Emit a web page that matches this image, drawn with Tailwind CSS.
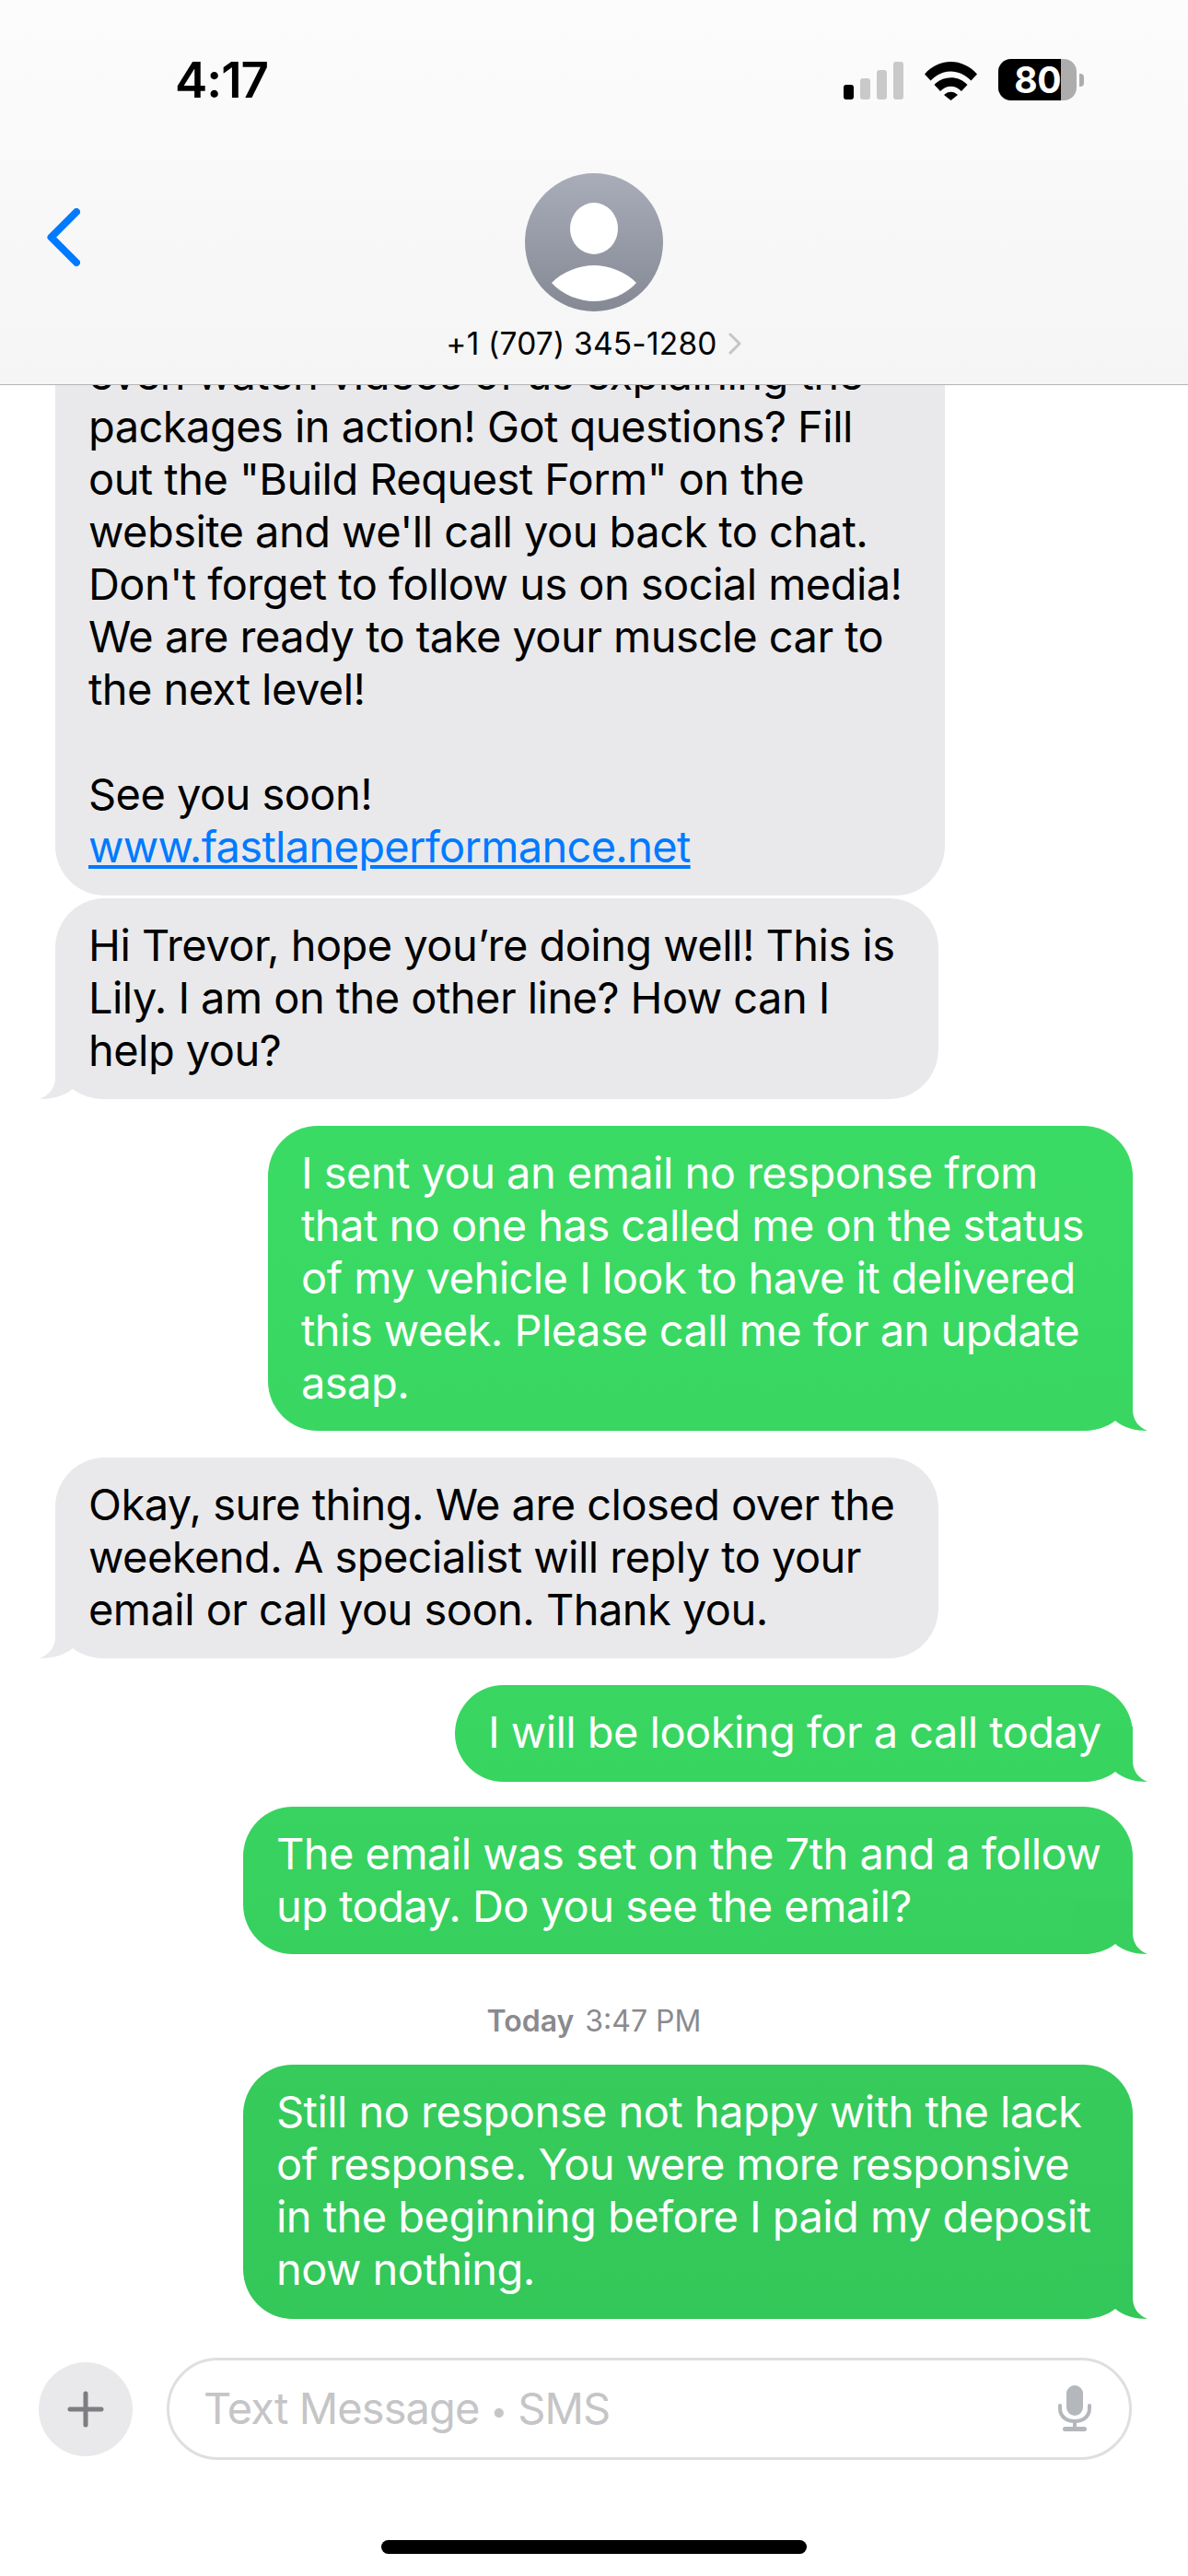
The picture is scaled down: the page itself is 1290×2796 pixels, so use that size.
<!DOCTYPE html>
<html lang="en">
  <head>
    <meta charset="UTF-8" />
    <title>Messages</title>
    <script src="https://cdn.jsdelivr.net/npm/@tailwindcss/browser@4"></script>
  </head>
  <body class="bg-white text-black font-['Inter','Liberation_Sans',sans-serif]">
    <div class="w-[1290px] h-[2796px] flex flex-col overflow-hidden">
      <!-- Header -->
      <header class="h-[418px] shrink-0 bg-gradient-to-b from-[#fcfcfc] to-[#f5f5f5] border-b border-[#b4b4b6] flex flex-col">
        <!-- Status bar -->
        <div class="h-[188px] shrink-0 flex items-start justify-between pl-[190px] pr-[113px] pt-[64px]">
          <span class="text-[53px] leading-[46px] font-semibold tracking-[-1px]">4:17</span>
          <div class="flex items-center gap-[23px]">
            <div class="flex items-end gap-[7px] h-[41px] mt-[2px]">
              <div class="w-[11px] h-[16px] rounded-[3px] bg-black"></div>
              <div class="w-[11px] h-[23px] rounded-[3px] bg-[#c9c9c9]"></div>
              <div class="w-[11px] h-[32px] rounded-[3px] bg-[#c9c9c9]"></div>
              <div class="w-[11px] h-[41px] rounded-[3px] bg-[#c9c9c9]"></div>
            </div>
            <svg width="57" height="42" viewBox="0 0 57 42" class="mt-[2px]">
              <path d="M0 13.5 C16 -4.5 41 -4.5 57 13.5 L50.5 20.5 C37.5 7 19.5 7 6.5 20.5 Z" fill="#000" />
              <path d="M10.5 25 C20 14.5 37 14.5 46.500 25 L40 32 C33 25 24 25 17 32 Z" fill="#000" />
              <path d="M21 36 C25.500 31.500 31.500 31.500 36 36 L28.500 42 Z" fill="#000" />
            </svg>
            <div class="flex items-center gap-[3px]">
              <div class="w-[85px] h-[45px] rounded-[14px] flex bg-[#adadad]">
                <div class="w-[68px] h-full rounded-l-[14px] bg-black text-white text-[39px] leading-[45px] font-bold text-right tracking-[-0.5px]">80</div>
              </div>
              <div class="w-[5px] h-[14px] rounded-r-[4px] bg-[#adadad]"></div>
            </div>
          </div>
        </div>
        <!-- Contact -->
        <div class="grid grid-cols-[1fr_auto_1fr] items-start">
          <div class="pl-[51px] pt-[38px]">
            <svg width="36" height="63" viewBox="0 0 36 63">
              <path d="M32 4 L4.500 31.500 L32 59" fill="none" stroke="#007aff" stroke-width="8" stroke-linecap="round" stroke-linejoin="round" />
            </svg>
          </div>
          <div class="flex flex-col items-center">
            <div class="w-[150px] h-[150px] rounded-full overflow-hidden bg-gradient-to-b from-[#a9adba] to-[#858994]">
              <svg width="150" height="150" viewBox="0 0 150 150">
                <ellipse cx="75" cy="60" rx="26" ry="28" fill="#fff" />
                <path d="M29 119 C40 107 60 100 75 100 C90 100 110 107 121 119 C110 132 90 139 75 139 C60 139 40 132 29 119 Z" fill="#fff" />
              </svg>
            </div>
            <div class="flex items-center gap-[11px] mt-[15px]">
              <span class="text-[33.500px] leading-[40px] tracking-[0.2px] whitespace-nowrap">+1 (707) 345-1280</span>
              <svg width="16" height="24" viewBox="0 0 16 24">
                <path d="M3 2 L13 12 L3 22" fill="none" stroke="#c5c5c7" stroke-width="3" stroke-linecap="round" stroke-linejoin="round" />
              </svg>
            </div>
          </div>
          <div></div>
        </div>
      </header>

      <!-- Messages -->
      <main class="flex-1 min-h-0 overflow-hidden flex flex-col justify-end pb-[42px] text-[47px] leading-[57px] tracking-[-0.55px] whitespace-nowrap">
        <div class="ml-[60px] w-[966px] shrink-0 rounded-[54px] bg-[#e9e9eb] pl-[36px] pt-[22px] pb-[25px]">
          even watch videos of us explaining the<br />
          packages in action! Got questions? Fill<br />
          out the "Build Request Form" on the<br />
          website and we'll call you back to chat.<br />
          Don't forget to follow us on social media!<br />
          We are ready to take your muscle car to<br />
          the next level!<br />
          <br />
          See you soon!<br />
          <a class="text-[#007aff] underline tracking-[-0.7px]">www.fastlaneperformance.net</a>
        </div>

        <div class="relative ml-[60px] mt-[3px] w-[959px] shrink-0 rounded-[54px] bg-[#e9e9eb] pl-[36px] pt-[22px] pb-[25px]">
          <svg class="absolute left-[-17px] bottom-0" width="80" height="60" viewBox="0 0 80 60">
            <path d="M80 0 L17 0 L17 37 C17 48 10 56 0 60 C12 60 27 57 36 49 C45 56 57 60 72 60 L80 60 Z" fill="#e9e9eb" />
          </svg>
          <p class="relative">
            Hi Trevor, hope you’re doing well! This is<br />
            Lily. I am on the other line? How can I<br />
            help you?
          </p>
        </div>

        <div class="relative ml-[291px] mt-[29px] w-[939px] shrink-0 rounded-[54px] bg-gradient-to-b from-[#3adb64] to-[#39d762] text-white pl-[36px] pt-[22px] pb-[24px]">
          <svg class="absolute right-[-16px] bottom-0" width="80" height="60" viewBox="0 0 80 60">
            <path d="M0 0 L64 0 L64 37 C64 48 70 56 80 60 C68 60 54 57 45 49 C36 56 24 60 9 60 L0 60 Z" fill="#39d762" />
          </svg>
          <p class="relative">
            I sent you an email no response from<br />
            that no one has called me on the status<br />
            of my vehicle I look to have it delivered<br />
            this week. Please call me for an update<br />
            asap.
          </p>
        </div>

        <div class="relative ml-[60px] mt-[29px] w-[959px] shrink-0 rounded-[54px] bg-[#e9e9eb] pl-[36px] pt-[22px] pb-[25px]">
          <svg class="absolute left-[-17px] bottom-0" width="80" height="60" viewBox="0 0 80 60">
            <path d="M80 0 L17 0 L17 37 C17 48 10 56 0 60 C12 60 27 57 36 49 C45 56 57 60 72 60 L80 60 Z" fill="#e9e9eb" />
          </svg>
          <p class="relative">
            Okay, sure thing. We are closed over the<br />
            weekend. A specialist will reply to your<br />
            email or call you soon. Thank you.
          </p>
        </div>

        <div class="relative ml-[494px] mt-[29px] w-[736px] shrink-0 rounded-[54px] bg-gradient-to-b from-[#39d662] to-[#38d460] text-white pl-[36px] pt-[22px] pb-[26px]">
          <svg class="absolute right-[-16px] bottom-0" width="80" height="60" viewBox="0 0 80 60">
            <path d="M0 0 L64 0 L64 37 C64 48 70 56 80 60 C68 60 54 57 45 49 C36 56 24 60 9 60 L0 60 Z" fill="#38d460" />
          </svg>
          <p class="relative">I will be looking for a call today</p>
        </div>

        <div class="relative ml-[264px] mt-[27px] w-[966px] shrink-0 rounded-[54px] bg-gradient-to-b from-[#38d360] to-[#37d05e] text-white pl-[36px] pt-[22px] pb-[24px]">
          <svg class="absolute right-[-16px] bottom-0" width="80" height="60" viewBox="0 0 80 60">
            <path d="M0 0 L64 0 L64 37 C64 48 70 56 80 60 C68 60 54 57 45 49 C36 56 24 60 9 60 L0 60 Z" fill="#37d05e" />
          </svg>
          <p class="relative">
            The email was set on the 7th and a follow<br />
            up today. Do you see the email?
          </p>
        </div>

        <div class="h-[120px] shrink-0 pt-[25px] flex items-center justify-center gap-[12px] text-[32px] leading-[40px] tracking-normal text-[#8a8a8e]">
          <span class="font-semibold">Today</span>
          <span>3:47 PM</span>
        </div>

        <div class="relative ml-[264px] w-[966px] shrink-0 rounded-[54px] bg-gradient-to-b from-[#36cb5b] to-[#34c759] text-white pl-[36px] pt-[22px] pb-[26px]">
          <svg class="absolute right-[-16px] bottom-0" width="80" height="60" viewBox="0 0 80 60">
            <path d="M0 0 L64 0 L64 37 C64 48 70 56 80 60 C68 60 54 57 45 49 C36 56 24 60 9 60 L0 60 Z" fill="#34c759" />
          </svg>
          <p class="relative">
            Still no response not happy with the lack<br />
            of response. You were more responsive<br />
            in the beginning before I paid my deposit<br />
            now nothing.
          </p>
        </div>
      </main>

      <!-- Composer -->
      <footer class="h-[237px] shrink-0 relative">
        <div class="flex items-center pl-[42px] pr-[61px] gap-[37px] h-[111px]">
          <div class="w-[102px] h-[102px] shrink-0 rounded-full bg-[#e9e9eb] flex items-center justify-center">
            <svg width="40" height="40" viewBox="0 0 40 40">
              <path d="M20 3 L20 37 M3 20 L37 20" stroke="#7d7d82" stroke-width="5" stroke-linecap="round" />
            </svg>
          </div>
          <div class="flex-1 h-[111px] rounded-full border-[3px] border-[#dfdfe1] flex items-center justify-between pl-[37px] pr-[41px]">
            <span class="text-[47px] leading-[57px] text-[#c5c5c7] tracking-[-0.9px]">Text Message <span class="text-[32px] align-[3px]">•</span> SMS</span>
            <svg width="36" height="50" viewBox="0 0 36 50" class="mt-[-2px]">
              <rect x="9" y="0" width="18" height="33" rx="9" fill="#b4b7bc" />
              <path d="M2 22 L2 25 C2 34 9 39 18 39 C27 39 34 34 34 25 L34 22" fill="none" stroke="#b4b7bc" stroke-width="4" stroke-linecap="round" />
              <path d="M18 39 L18 46" stroke="#b4b7bc" stroke-width="4" />
              <rect x="5" y="45" width="26" height="5" rx="2.500" fill="#b4b7bc" />
            </svg>
          </div>
        </div>
        <div class="absolute left-[414px] top-[198px] w-[462px] h-[15px] rounded-full bg-black"></div>
      </footer>
    </div>
  </body>
</html>
